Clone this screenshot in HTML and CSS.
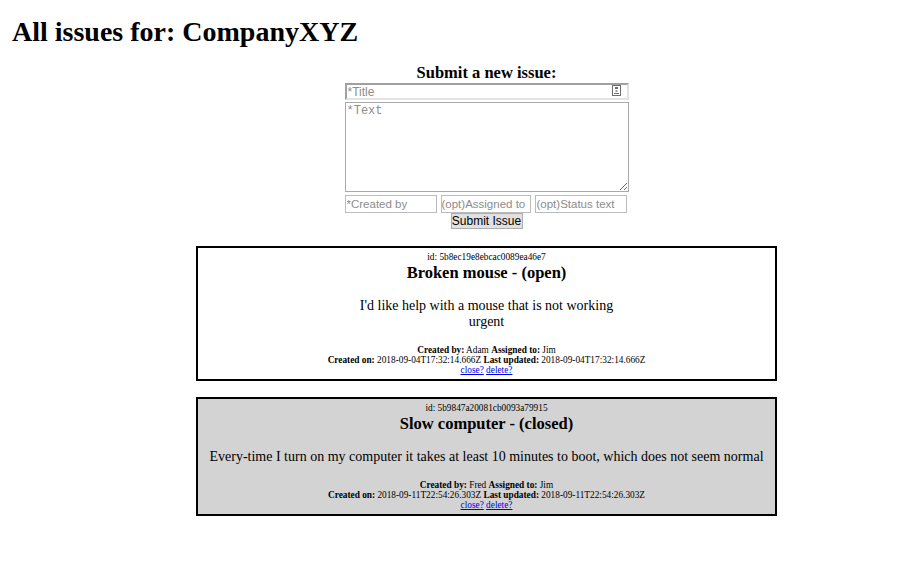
FILE: index.html
```html
<!DOCTYPE html>
<html>
<head>
    <title>Issue Tracker</title>
    <link rel="stylesheet" href="styles.css">
</head>
<body>

<h1 class="page-title">All issues for: CompanyXYZ</h1>

<div class="main">
    <form class="new-issue">
        <h3>Submit a new issue:</h3>
        <div class="title-wrap">
            <input type="text" class="title-input" placeholder="*Title">
            <span class="title-icon"><svg width="9" height="11" viewBox="0 0 9 11"><rect x="0.5" y="0.5" width="8" height="10" fill="#fff" stroke="#6d6d6d"/><rect x="3" y="2" width="3" height="2" fill="#6d6d6d"/><rect x="3.5" y="5" width="2" height="2" fill="#9a9a9a"/><rect x="2" y="8" width="5" height="1" fill="#6d6d6d"/></svg></span>
        </div>
        <textarea class="text-input" placeholder="*Text"></textarea>
        <div class="small-inputs">
            <input type="text" placeholder="*Created by">
            <input type="text" placeholder="(opt)Assigned to">
            <input type="text" placeholder="(opt)Status text">
        </div>
        <button type="button" class="submit-btn">Submit Issue</button>
    </form>

    <div class="issue">
        <div class="issue-id">id: 5b8ec19e8ebcac0089ea46e7</div>
        <h3 class="issue-title">Broken mouse - (open)</h3>
        <p class="issue-text">I'd like help with a mouse that is not working<br>urgent</p>
        <div class="issue-meta"><b>Created by:</b> Adam <b>Assigned to:</b> Jim</div>
        <div class="issue-meta"><b>Created on:</b> 2018-09-04T17:32:14.666Z <b>Last updated:</b> 2018-09-04T17:32:14.666Z</div>
        <div class="issue-meta"><a href="#">close?</a> <a href="#">delete?</a></div>
    </div>

    <div class="issue closed">
        <div class="issue-id">id: 5b9847a20081cb0093a79915</div>
        <h3 class="issue-title">Slow computer - (closed)</h3>
        <p class="issue-text">Every-time I turn on my computer it takes at least 10 minutes to boot, which does not seem normal</p>
        <div class="issue-meta"><b>Created by:</b> Fred <b>Assigned to:</b> Jim</div>
        <div class="issue-meta"><b>Created on:</b> 2018-09-11T22:54:26.303Z <b>Last updated:</b> 2018-09-11T22:54:26.303Z</div>
        <div class="issue-meta"><a href="#">close?</a> <a href="#">delete?</a></div>
    </div>
</div>

</body>
</html>
```

FILE: styles.css
```css
body {
    font-family: "Liberation Serif", "Times New Roman", serif;
    color: #000;
    background: #fff;
    margin: 8px;
}
.page-title {
    font-size: 28px;
    line-height: 31px;
    margin: 8px 0 0;
    padding-left: 4px;
}
.main {
    margin-left: 76px;
}
.new-issue {
    width: 284px;
    margin: 17px auto 0;
    text-align: center;
}
.new-issue h3 {
    font-size: 16.5px;
    line-height: 18px;
    margin: 0 0 1px;
}
.title-wrap {
    position: relative;
    height: 17px;
}
.title-input {
    box-sizing: border-box;
    width: 284px;
    height: 17px;
    margin: 0;
    padding: 0 1px;
    border: 2px solid #a0a0a0;
    border-right-color: #e3e3e3;
    border-bottom-color: #e3e3e3;
    font-family: "Liberation Sans", Arial, sans-serif;
    font-size: 12px;
    display: block;
}
.title-icon {
    position: absolute;
    right: 8px;
    top: 2px;
    line-height: 0;
}
.text-input {
    box-sizing: border-box;
    display: block;
    width: 284px;
    height: 90px;
    margin: 2px 0 0;
    padding: 1px;
    border: 1px solid #a9a9a9;
    font-family: "Liberation Mono", "Courier New", monospace;
    font-size: 12px;
    resize: vertical;
}
.small-inputs {
    display: flex;
    gap: 4px;
    margin-top: 3px;
}
.small-inputs input {
    box-sizing: border-box;
    width: 92px;
    height: 18px;
    margin: 0;
    padding: 0 1px;
    border: 1px solid #bcbcbc;
    font-family: "Liberation Sans", Arial, sans-serif;
    font-size: 11.5px;
}
.small-inputs input:nth-child(2) {
    width: 90px;
    padding: 0;
}
input::placeholder, textarea::placeholder {
    color: #8c8c8c;
}
.submit-btn {
    display: block;
    height: 16px;
    width: 72px;
    margin: 0 auto;
    padding: 0;
    background: #e1e1e1;
    border: 1px solid #adadad;
    font-family: "Liberation Sans", Arial, sans-serif;
    font-size: 12px;
    line-height: 14px;
    color: #000;
}
.issue {
    width: 577px;
    margin: 17px auto 0;
    border: 2px solid #000;
    padding: 3px 0 4px;
    text-align: center;
}
.issue + .issue {
    margin-top: 16px;
}
.closed {
    background: #d3d3d3;
}
.issue-id {
    font-size: 9.3px;
    line-height: 12px;
}
.issue-title {
    font-size: 16.5px;
    line-height: 20px;
    margin: 0;
}
.issue-text {
    font-size: 14px;
    line-height: 16px;
    margin: 15px 0;
}
.issue-meta {
    font-size: 9.3px;
    line-height: 10px;
}
.issue-meta a {
    color: #0000ee;
}
```
